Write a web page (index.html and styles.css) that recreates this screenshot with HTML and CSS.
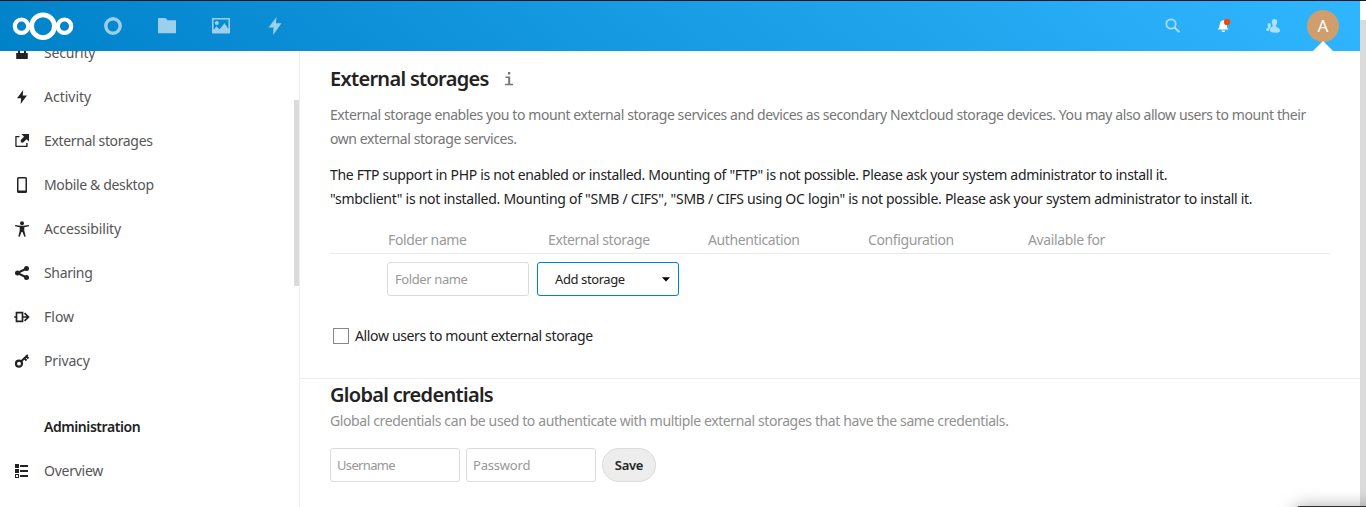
FILE: index.html
```
<!DOCTYPE html>
<html lang="en">
<head>
<meta charset="utf-8">
<title>External storages</title>
<link rel="stylesheet" href="styles.css">
</head>
<body>
<div class="page">
<header class="header">
  <svg class="logo" width="62" height="30" viewBox="0 0 62 30" fill="none" stroke="#fff"><circle cx="9.500" cy="15.200" r="6.700" stroke-width="4.200"/><circle cx="31" cy="15.200" r="11.400" stroke-width="4.800"/><circle cx="52.500" cy="15.200" r="6.700" stroke-width="4.200"/></svg>
  <nav class="apps">
    <svg width="20" height="20" viewBox="0 0 20 20"><circle cx="10" cy="10" r="7.200" fill="none" stroke="#fff" stroke-width="3.400"/></svg>
    <svg width="20" height="20" viewBox="0 0 20 20"><path d="M1.800 2h6.800l2 2.200H19V16.700q0 .6-.6.6H1.600q-.6 0-.6-.6V2.800q0-.8.8-.8z" fill="#fff"/></svg>
    <svg width="20" height="20" viewBox="0 0 20 20"><path fill="#fff" fill-rule="evenodd" d="M1.600 2h16.800q.6 0 .6.6v14.200q0 .6-.6.6H1.600q-.6 0-.6-.6V2.600q0-.6.6-.6zM2.500 3.500V14l3-3.800 3 3.200 5-6.200 4 5.800V3.500z"/><circle cx="5.800" cy="7" r="2" fill="#fff"/></svg>
    <svg width="20" height="20" viewBox="0 0 20 20"><path d="M11.500 1 3.600 11.500h5L8 19l8.500-11.800h-5.600z" fill="#fff"/></svg>
  </nav>
  <div class="tools">
    <svg class="dim" width="16" height="16" viewBox="0 0 16 16" fill="none" stroke="#fff"><circle cx="6" cy="6" r="4.700" stroke-width="1.700"/><path d="M9.500 9.500l5 4.700" stroke-width="2"/></svg>
    <svg width="16" height="16" viewBox="0 0 16 16"><path d="M8.300 2.300C6 2.600 4.900 4.300 4.700 6.500 4.500 9 4 10.200 2.800 11.600h10.600c-1-1.400-1.600-2.800-1.800-5.100C11.400 4.300 10.400 2.600 8.300 2.300zM6.300 12.500h3.900q-.4 1.500-1.900 1.500t-2-1.500z" fill="#fff"/><circle cx="12" cy="4" r="3.100" fill="#ff4402"/></svg>
    <svg class="dim" width="16" height="16" viewBox="0 0 16 16" fill="#fff"><path d="M9.500 1C7.800 1 6.800 2.200 6.800 4c0 2 .9 2.700.9 3.700 0 1.300-2.900 1.500-2.900 4.300 0 1.800 1.500 2.700 5.200 2.700s5.200-.9 5.200-2.300c0-2.500-4.200-2.800-4.200-4.700 0-1 1.200-1.700 1.200-3.700C12.200 2.200 11.200 1 9.500 1z"/><path d="M4.300 5C3.200 5 2.600 5.800 2.600 7c0 1.300.6 1.700.6 2.300C3.200 10 1 10.200 1 11.800c0 .8.800 1.200 2.900 1.200.1-2.400 1.200-3 1.900-3.700-.3-.5 0-1 0-2.300 0-1.200-.5-2-1.500-2z"/></svg>
    <div class="avatar">A</div>
  </div>
</header>
<div class="body">
<aside class="side">
  <ul class="menu">
    <li><svg width="16" height="16" viewBox="0 0 16 16"><path d="M8 1a4 4 0 0 0-4 4v3H2.200v5.500q0 .5.500.5h10.600q.5 0 .5-.5V8H12V5a4 4 0 0 0-4-4zm0 2a2 2 0 0 1 2 2v3H6V5a2 2 0 0 1 2-2z"/></svg><span class="t15">Security</span></li>
    <li><svg width="16" height="16" viewBox="0 0 16 16"><path d="M9.200 1 3 9.200h4.200L6.600 15 13 6.500H8.700z"/></svg><span>Activity</span></li>
    <li><svg width="16" height="16" viewBox="0 0 16 16"><path d="M7.500 1H15v7.500l-2.500-2.300-3.200 3.200H6.800V7l3.200-3.200zM1.500 3h4v1.300H2.600v8.500h9.600V10h1.400v4H2.200q-.9 0-.9-.8V3z"/></svg><span class="t35">External storages</span></li>
    <li><svg width="16" height="16" viewBox="0 0 16 16"><path fill-rule="evenodd" d="M4.500 0h7q1.500 0 1.500 1.500v13q0 1.500-1.500 1.500h-7Q3 16 3 14.500v-13Q3 0 4.500 0zm0 1.500V13.500h7v-12z"/></svg><span class="t35">Mobile &amp; desktop</span></li>
    <li><svg width="16" height="16" viewBox="0 0 16 16"><circle cx="8" cy="2.200" r="2"/><path d="M1.200 4l5.300.8h3L14.800 4l.2 1.200-4.700 1.100v3.500l1.400 5.700-1.400.3L8.500 11h-1l-1.800 4.800-1.400-.3 1.400-5.700V6.300L1 5.200z"/></svg><span class="t15">Accessibility</span></li>
    <li><svg width="16" height="16" viewBox="0 0 16 16"><path d="M12.500 3.500 3.500 8l9 4.500" fill="none" stroke="#222" stroke-width="2"/><circle cx="12.500" cy="3.500" r="2.500"/><circle cx="3.500" cy="8" r="2.500"/><circle cx="12.500" cy="12.500" r="2.500"/></svg><span class="t35">Sharing</span></li>
    <li><svg width="16" height="16" viewBox="0 0 16 16"><path d="M.2 8h2M2.500 3.700h6v8.600h-6zM8.500 8h6M10.500 4.200l4 3.800-4 3.800" fill="none" stroke="#222" stroke-width="1.700"/></svg><span>Flow</span></li>
    <li><svg width="16" height="16" viewBox="0 0 16 16"><g fill="none" stroke="#222"><circle cx="5" cy="10.700" r="3" stroke-width="2.200"/><path d="M7 8.500 13.800 2M10.300 5.200l2.200 2.300M12.300 3.300l2.200 2.200" stroke-width="1.900"/></g></svg><span class="t15">Privacy</span></li>
    <li class="caption"><span>Administration</span></li>
    <li><svg width="16" height="16" viewBox="0 0 16 16"><path fill-rule="evenodd" d="M1 1h4v4H1zM6 2h8v2H6zM1 6h4v4H1zM6 7h8v2H6zM1 11h4v4H1zm1 1v2h2v-2zM6 12h8v2H6z"/></svg><span class="t25">Overview</span></li>
  </ul>
  <div class="thumb"></div>
</aside>
<main class="main">
  <section class="external">
    <h2><span>External storages</span><svg width="10" height="16" viewBox="0 0 10 16"><path d="M4 1h2.300v2.500H4zM1.500 5.500h4.700V12.700H9v1.500H1V12.700h3.200V7H1.500z" fill="#777"/></svg></h2>
    <p class="hint">External storage enables you to mount external storage services and devices as secondary Nextcloud storage devices. You may also allow users to mount their<br>own external storage services.</p>
    <p class="warn"><span class="ftp">The FTP support in PHP is not enabled or installed. Mounting of "FTP" is not possible. Please ask your system administrator to install it.</span><br><span class="smb">"smbclient" is not installed. Mounting of "SMB / CIFS", "SMB / CIFS using OC login" is not possible. Please ask your system administrator to install it.</span></p>
    <div class="thead"><span>Folder name</span><span>External storage</span><span>Authentication</span><span>Configuration</span><span>Available for</span></div>
    <div class="row"><div class="field folder">Folder name</div><div class="field select"><span>Add storage</span><svg width="8" height="5" viewBox="0 0 8 5"><path d="M0 .3h8L4 4.500z" fill="#000"/></svg></div></div>
    <label class="allow"><span class="box"></span><span class="t35">Allow users to mount external storage</span></label>
  </section>
  <section class="global">
    <h2><span>Global credentials</span></h2>
    <p class="note">Global credentials can be used to authenticate with multiple external storages that have the same credentials.</p>
    <div class="creds"><div class="field user">Username</div><div class="field pass">Password</div><div class="save">Save</div></div>
  </section>
</main>
</div>
</div>
<div class="scrollbar"></div>
<div class="dock"></div>
</body>
</html>
```
FILE: styles.css
```
* { box-sizing: border-box; }
body { margin: 0; width: 1366px; height: 507px; overflow: hidden; display: flex; position: relative; background: #fff; color: #222; font: 14px/24px "Noto Sans", sans-serif; border-top: 1px solid #101820; }
.page { width: 1360px; height: 506px; display: flex; flex-direction: column; flex: none; }
.header { height: 50px; flex: none; display: flex; align-items: center; padding-left: 12px; background: linear-gradient(40deg, #0082c9 0%, #30b6ff 100%); position: relative; z-index: 2; }
.logo { flex: none; }
.apps { display: flex; gap: 34px; margin-left: 29px; opacity: .6; }
svg { display: block; flex: none; }
.tools { margin-left: auto; display: flex; align-items: center; height: 50px; padding-right: 21px; gap: 34px; }
.dim { opacity: .6; }
.avatar { width: 32px; height: 32px; margin-left: -8px; border-radius: 50%; background: #d09e6d; color: #fff; font-size: 17px; line-height: 32px; text-align: center; position: relative; }
.avatar::after { content: ""; position: absolute; left: 6px; top: 31px; border: 10px solid transparent; border-top: 0; border-bottom-color: #fff; }
.body { flex: 1; display: flex; min-height: 0; }
.side { width: 300px; flex: none; border-right: 1px solid #ededed; position: relative; overflow: hidden; }
.menu { list-style: none; margin: -20px 0 0; padding: 0; color: #555; }
.menu li { height: 44px; display: flex; align-items: center; padding-left: 14px; gap: 14px; fill: #222; }
.menu .caption { margin-top: 22px; padding-left: 44px; font-weight: 600; color: #222; letter-spacing: -.43px; }
.t15 { letter-spacing: -.15px; }
.t25 { letter-spacing: -.25px; }
.t35 { letter-spacing: -.35px; }
.thumb { position: absolute; right: 0; top: 49px; width: 5px; height: 186px; background: #dbdbdb; }
.main { flex: 1; min-width: 0; }
.external { height: 328px; padding: 16px 30px 0; border-bottom: 1px solid #ededed; }
h2 { margin: 0; font-size: 20px; line-height: 24px; font-weight: 600; letter-spacing: -.7px; display: flex; align-items: center; gap: 15px; }
p { margin: 0; white-space: nowrap; }
.hint { color: #767676; margin-top: 12px; letter-spacing: -.41px; }
.warn { margin-top: 12px; }
.ftp { letter-spacing: -.32px; }
.smb { letter-spacing: -.275px; }
.thead { display: flex; height: 43px; padding: 17px 0 0 58px; border-bottom: 1px solid #ebebeb; color: #9a9a9a; letter-spacing: -.38px; }
.thead span { width: 160px; }
.row { display: flex; padding: 8px 0 0 57px; gap: 8px; }
.field { height: 34px; width: 142px; border: 1px solid #dbdbdb; border-radius: 3px; padding: 0 6px 0 7px; line-height: 33px; font-size: 13px; color: #989898; white-space: nowrap; letter-spacing: -.4px; }
.select { border-color: #0082c9; color: #222; padding: 0 8px 0 17px; display: flex; align-items: center; justify-content: space-between; }
.allow { display: flex; align-items: center; gap: 6px; margin: 28px 0 0 3px; }
.box { width: 16px; height: 16px; border: 1px solid #888; }
.global { padding: 4px 30px 0; }
.note { color: #919191; margin-top: 2px; letter-spacing: -.39px; }
.creds { display: flex; gap: 6px; margin-top: 15px; }
.creds .field { width: 130px; padding-left: 6px; }
.creds .user { letter-spacing: -.65px; }
.creds .pass { letter-spacing: -.2px; }
.save { width: 54px; height: 34px; border: 1px solid #dbdbdb; border-radius: 17px; background: #ededed; font-size: 13px; font-weight: 600; line-height: 33px; text-align: center; letter-spacing: -.3px; }
.scrollbar { width: 6px; margin-top: 19px; background: #dbdbdb; }
.dock { position: absolute; left: 1296px; right: -20px; top: 505px; height: 12px; background: #303030; border-radius: 4px 0 0; box-shadow: 0 3px 18px rgba(0,0,0,.5); z-index: 3; }
```
